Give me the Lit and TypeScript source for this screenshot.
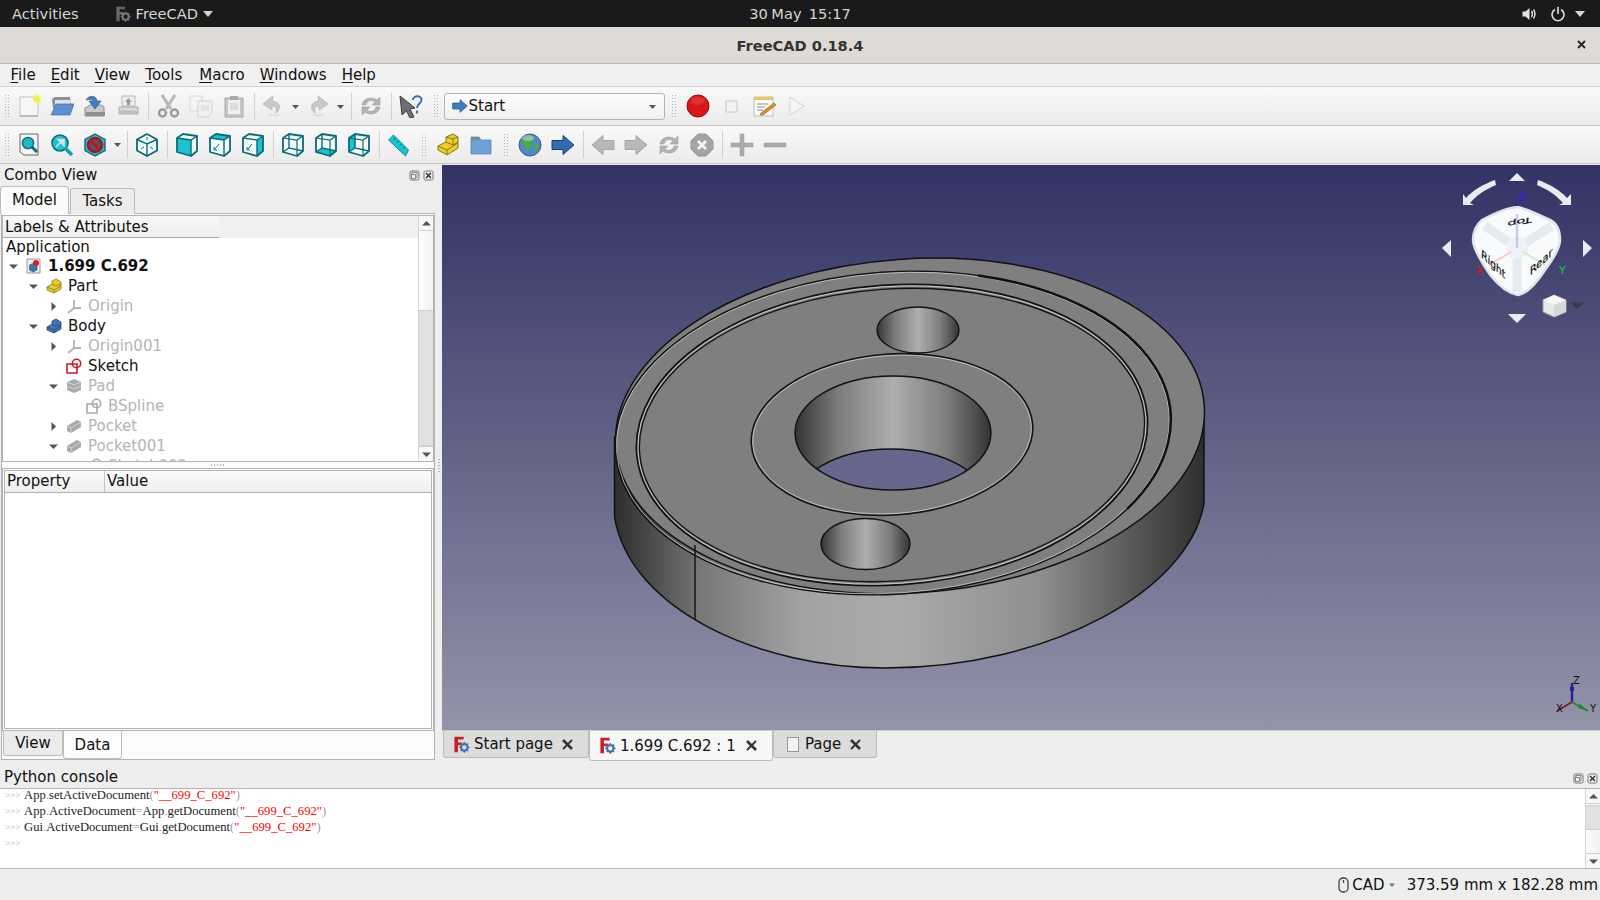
import { LitElement, html, css, svg } from "lit";
import { customElement } from "lit/decorators.js";

const T = "#17c4cf", TD = "#0b6b78";
const icon = (inner: unknown, size = 24, vb = "0 0 24 24") =>
  html`<svg width=${size} height=${size} viewBox=${vb}>${inner}</svg>`;

const cube = (face: string, filled: boolean) => {
  const faces: Record<string, string> = {
    front: "M2 5 L16 7 L16 23 L2 19 Z",
    top: "M2 5 L8 1 L22 3 L16 7 Z",
    right: "M16 7 L22 3 L22 18 L16 23 Z",
    rear: "M8 1 L22 3 L22 18 L8 15 Z",
    bottom: "M2 19 L8 15 L22 18 L16 23 Z",
    left: "M2 5 L8 1 L8 15 L2 19 Z",
  };
  const back = !["front", "top", "right"].includes(face);
  return icon(svg`
    <path d="M2 5 L8 1 L22 3 L22 18 L16 23 L2 19 Z" fill="#f4fbfb"/>
    ${filled ? svg`<path d=${faces[face]} fill=${T}/>` : ""}
    ${back
      ? svg`<path d="M8 1 L8 15 L22 18 M8 15 L2 19" fill="none" stroke=${TD} stroke-width="1.4"/>
            <path d="M2 5 L16 7 L22 3 M16 7 L16 23" fill="none" stroke=${TD} stroke-width="1.2"/>`
      : svg`<path d="M2 5 L16 7 L22 3 M16 7 L16 23" fill="none" stroke=${TD} stroke-width="1.4"/>
            ${face !== "front" ? svg`<path d="M11 11 L7 16 M6 14 L6 17 L9 17" fill="none" stroke=${TD} stroke-width="1"/>` : ""}`}
    <path d="M2 5 L8 1 L22 3 L22 18 L16 23 L2 19 Z" fill="none" stroke=${TD} stroke-width="1.8" stroke-linejoin="round"/>
  `);
};

const fLogo = (c1: string, c2: string, size = 18) =>
  icon(svg`
    <path d="M2 1 H15 V5 H7 V9 H13 V13 H7 V23 H2 Z" fill=${c1}/>
    <circle cx="16" cy="16" r="4.6" fill="none" stroke=${c2} stroke-width="3"/>
    <path d="M16 8.5 V11 M16 21 V23.5 M8.5 16 H11 M21 16 H23.5 M10.7 10.7 L12.4 12.4 M19.6 19.6 L21.3 21.3 M21.3 10.7 L19.6 12.4 M12.4 19.6 L10.7 21.3" stroke=${c2} stroke-width="2"/>
  `, size);

const I: Record<string, () => unknown> = {
  new: () => icon(svg`<path d="M3 3 H21 V22 H3 Z" fill="#f6f6f4" stroke="#c4c4c0"/><path d="M3 22 H21" stroke="#9a9a98"/><circle cx="20" cy="5" r="4.5" fill="#f6ee3a" opacity=".55"/><circle cx="20" cy="5" r="2.6" fill="#f7f02a"/>`),
  open: () => icon(svg`<path d="M2 5 L5 3 H20 L21 14 H3 Z" fill="#8a8f96"/><path d="M5 6 H20 V12 H5 Z" fill="#dfe3e6"/><path d="M6 10 H24 L20 21 H1 Z" fill="#5b8fd0" stroke="#3f6ea8" stroke-width=".7"/>`),
  save: () => icon(svg`<path d="M4 13 L7 11 H18 L21 13 V22 H2 V14 Z" fill="#c9c9c9" stroke="#8c8c8c"/><path d="M3 18 H22 V22 H3 Z" fill="#8f8f8f"/><path d="M3 6 C6 1 13 1 14 7 H18 L12 15 L6 7 H10 C10 5 7 5 3 6 Z" fill="#3f7cc2" stroke="#2c5c96" stroke-width=".7"/>`),
  saveas: () => icon(svg`<path d="M6 2 H19 V12 H6 Z" fill="#ededed" stroke="#b9b9b9"/><path d="M12.5 4 L16 8 H14 V11 H11 V8 H9 Z" fill="#9a9a9a"/><path d="M3 13 H22 V20 H3 Z" fill="#dadada" stroke="#a9a9a9" stroke-linejoin="round"/><path d="M3 18 H22" stroke="#bcbcbc" stroke-width="3"/>`),
  cut: () => icon(svg`<path d="M6 1 L15 15 M19 1 L10 15" stroke="#b9b9b9" stroke-width="3.2"/><circle cx="6.5" cy="19" r="3.5" fill="none" stroke="#9b9b9b" stroke-width="2.4"/><circle cx="18.5" cy="19" r="3.5" fill="none" stroke="#9b9b9b" stroke-width="2.4"/>`),
  copy: () => icon(svg`<path d="M1 2 H13 V17 H1 Z" fill="#f4f4f4" stroke="#d8d8d8"/><path d="M9 7 H23 L23 18 L19 23 H9 Z" fill="#f1f1f1" stroke="#d3d3d3"/><path d="M12 11 H20 V17 H12 Z" fill="#e2e2e2"/>`),
  paste: () => icon(svg`<path d="M3 4 H21 V23 H3 Z" fill="#c8c8c8" stroke="#a8a8a8"/><path d="M6 6 H18 V20 H6 Z" fill="#f0f0f0"/><path d="M8 2 H16 V6 H8 Z" fill="#a9a9a9"/><path d="M8 9 H16 V16 H8 Z" fill="#dcdcdc"/>`),
  undo: () => icon(svg`<path d="M12 2 L2 10 L11 16 V12 C15 12 16 14 15 19 C20 15 20 8 11 7 Z" fill="#c8c8c8" stroke="#bcbcbc"/><ellipse cx="12" cy="21" rx="7" ry="1.6" fill="#e2e2e2"/>`),
  redo: () => icon(svg`<path d="M12 2 L22 10 L13 16 V12 C9 12 8 14 9 19 C4 15 4 8 13 7 Z" fill="#c8c8c8" stroke="#bcbcbc"/><ellipse cx="12" cy="21" rx="7" ry="1.6" fill="#e2e2e2"/>`),
  refresh: () => icon(svg`<path d="M3 11 C4 4 13 2 18 6 L21 3 V11 H13 L16 8 C12 5 8 7 7 11 Z" fill="#b2b2b2" stroke="#9d9d9d" stroke-width=".6"/><path d="M21 13 C20 20 11 22 6 18 L3 21 V13 H11 L8 16 C12 19 16 17 17 13 Z" fill="#b2b2b2" stroke="#9d9d9d" stroke-width=".6"/>`),
  help: () => icon(svg`<path d="M1 2 L16 14 L11 15 L15 23 L11 24 L7.5 17 L3 21 Z" fill="#6f6f6f" stroke="#3c3c3c"/><path d="M14 6 C14 1 23 1 22.5 6 C22 10 18 9.5 18 14 M18 16.5 V19.5" fill="none" stroke="#3a6fb2" stroke-width="2"/>`),
  record: () => icon(svg`<circle cx="12" cy="12" r="11" fill="#d81818" stroke="#8c1010"/><ellipse cx="12" cy="7" rx="7" ry="4" fill="#ee4040" opacity=".6"/>`),
  stop: () => icon(svg`<path d="M7 7 H18 V18 H7 Z" fill="#f2f2f2" stroke="#c9c9c9"/>`),
  macro: () => icon(svg`<path d="M2 3 H21 V22 H2 Z" fill="#fbfbf6" stroke="#bdbdbd"/><path d="M2 3 H21 V6 H2 Z" fill="#e6c861"/><path d="M5 10 H16 M5 13 H13 M5 16 H11" stroke="#8a8a8a"/><path d="M9 19 L22 9 L24 11 L11 21 L8 21 Z" fill="#e08b2c" stroke="#8a5a20" stroke-width=".6"/>`),
  play: () => icon(svg`<path d="M5 3 L19 12 L5 21 Z" fill="#f6f6f6" stroke="#d4d4d4"/>`),
  fit: () => icon(svg`<path d="M3 1 H21 V22 H7 L3 19 Z" fill="#f4f4f4" stroke="#666"/><circle cx="11" cy="10" r="5.6" fill="#1fb8c4" stroke=${TD} stroke-width="1.4"/><path d="M15 14 L20 19" stroke=${TD} stroke-width="3"/>`),
  fitsel: () => icon(svg`<circle cx="10" cy="10" r="8" fill=${T} stroke=${TD} stroke-width="1.6"/><path d="M15 15 L22 22" stroke="#14a0ac" stroke-width="3.6"/><path d="M6 14 L11.5 8.5 M8 6.5 H14 V12.5 Z" stroke="#dde" stroke-width="1.6" fill="#dde"/>`),
  draw: () => icon(svg`<path d="M12 1 L22 6.5 V17.5 L12 23 L2 17.5 V6.5 Z" fill=${T} stroke=${TD} stroke-width="1.4"/><circle cx="12" cy="12" r="7" fill="#4a5a5f" stroke="#b2101a" stroke-width="2.6"/><path d="M7 7 L17 17" stroke="#c8101a" stroke-width="2.8"/>`),
  iso: () => icon(svg`<path d="M12 1 L22 6.5 V17.5 L12 23 L2 17.5 V6.5 Z" fill="#f4fbfb" stroke=${TD} stroke-width="1.8"/><path d="M2 6.5 L12 11 L22 6.5 M12 11 V23" fill="none" stroke=${TD} stroke-width="1.4"/><path d="M6 16 L9 14 M18 16 L15 14 M12 4 V7" stroke=${TD}/>`),
  front: () => cube("front", true), top: () => cube("top", true), right: () => cube("right", true),
  rear: () => cube("rear", false), bottom: () => cube("bottom", true), left: () => cube("left", true),
  measure: () => icon(svg`<g transform="translate(-1.5 0)"><path d="M3 7 L8 2 L23 17 L20 23 Z" fill=${T} stroke="#0e8e9a"/><path d="M8 7 L10 5 M11 10 L13 8 M14 13 L16 11 M17 16 L19 14" stroke="#0b6b78"/></g>`),
  part: () => icon(svg`<path d="M2 13 L10 9 V4 L17 1 L22 4 V15 L11 22 L2 17 Z" fill="#e8cf2b" stroke="#8a7a10"/><path d="M2 13 L11 17 L22 10 M11 17 V22 M10 9 L17 12 L22 9 M17 6 V12 M10 4 L17 6 L22 4" fill="none" stroke="#8a7a10"/>`),
  folder: () => icon(svg`<path d="M2 4 H10 L12 7 H22 V21 H2 Z" fill="#6fa0d6" stroke="#4f7fb5" stroke-width=".7"/><path d="M2 4 H10 L12 7 H2 Z" fill="#7c8a9a"/>`),
  globe: () => icon(svg`<circle cx="12" cy="12" r="11" fill="#4f86cc" stroke="#445e88"/><path d="M6 5 L13 3 L16 7 L12 10 L14 14 L10 18 L7 13 L3 11 Z M17 11 L21 10 L20 17 L16 19 Z" fill="#4caf3c"/><ellipse cx="10" cy="5" rx="6" ry="3" fill="#fff" opacity=".35"/>`),
  fwd: () => icon(svg`<path d="M1 7.5 H12 V2.5 L23 12 L12 21.5 V16.5 H1 Z" fill="#2e6cb4" stroke="#1f3f6c"/>`),
  gback: () => icon(svg`<path d="M23 7.5 H12 V2.5 L1 12 L12 21.5 V16.5 H23 Z" fill="#b8b8b8" stroke="#a6a6a6"/>`),
  gfwd: () => icon(svg`<path d="M1 7.5 H12 V2.5 L23 12 L12 21.5 V16.5 H1 Z" fill="#b8b8b8" stroke="#a6a6a6"/>`),
  gstop: () => icon(svg`<path d="M8 1 H16 L23 8 V16 L16 23 H8 L1 16 V8 Z" fill="#a4a4a4" stroke="#959595"/><path d="M8 8 L16 16 M16 8 L8 16" stroke="#f4f4f4" stroke-width="3"/>`),
  plus: () => icon(svg`<path d="M1 10 H10 V1 H14 V10 H23 V14 H14 V23 H10 V14 H1 Z" fill="#ababab" stroke="#9a9a9a" stroke-width=".5"/>`),
  minus: () => icon(svg`<path d="M1 10 H23 V14 H1 Z" fill="#ababab" stroke="#9a9a9a" stroke-width=".5"/>`),
};

const tiny = (inner: unknown) => icon(inner, 16, "0 0 16 16");
const tree: Record<string, unknown> = {
  doc: tiny(svg`<path d="M1 1 H14 V15 H1 Z" fill="#eee" stroke="#999"/><path d="M3.5 7 L8 5 L11 7 V12 L7 14 L3.5 12 Z" fill="#3f74b4" stroke="#234a7c" stroke-width=".6"/><circle cx="10" cy="5" r="3" fill="#d9202a"/>`),
  part: tiny(svg`<path d="M1 9 L6 6 V3 L10 1 L15 4 V11 L8 15 L1 12 Z" fill="#e5cb2e" stroke="#8d7c14" stroke-width=".8"/><path d="M1 9 L8 12 L15 8 M8 12 V15 M6 6 L10 8 L15 6" fill="none" stroke="#8d7c14" stroke-width=".8"/>`),
  origin: tiny(svg`<path d="M8 2 V10 M8 10 L15 10 M8 10 L2 15" stroke="#b4b4b4" stroke-width="1.8" fill="none"/>`),
  body: tiny(svg`<path d="M1 9 L6 6 V3 L10 1 L15 4 V11 L8 15 L1 12 Z" fill="#3f74b4" stroke="#234a7c" stroke-width=".8"/><path d="M1 9 L8 12 L15 8 M8 12 V15 M6 6 L10 8 L15 6" fill="none" stroke="#234a7c" stroke-width=".8"/>`),
  sketch: tiny(svg`<path d="M1 6 H11 V15 H1 Z" fill="#fff" fill-opacity=".4" stroke="#cc1c24" stroke-width="1.6"/><circle cx="10.5" cy="5.5" r="4.2" fill="none" stroke="#cc1c24" stroke-width="1.6"/>`),
  pad: tiny(svg`<path d="M1 4 L8 1 L15 4 V12 L8 15 L1 12 Z" fill="#a9a9a9"/><path d="M1 4 L8 7 L15 4 M1 8 L8 11 L15 8" fill="none" stroke="#d5d5d5"/>`),
  bspline: tiny(svg`<path d="M1 6 H11 V15 H1 Z" fill="none" stroke="#a8a8a8" stroke-width="1.5"/><circle cx="10.5" cy="5.5" r="4.2" fill="none" stroke="#a8a8a8" stroke-width="1.5"/>`),
  pocket: tiny(svg`<path d="M1 8 L11 2 L15 4 V9 L5 15 L1 13 Z" fill="#a9a9a9"/><path d="M1 8 L5 10 L15 4 M5 10 V15" fill="none" stroke="#d0d0d0"/>`),
};

const rows = [
  { l: 0, a: "d", i: "doc", t: "1.699 C.692", c: "bold" },
  { l: 1, a: "d", i: "part", t: "Part", c: "" },
  { l: 2, a: "r", i: "origin", t: "Origin", c: "dim" },
  { l: 1, a: "d", i: "body", t: "Body", c: "" },
  { l: 2, a: "r", i: "origin", t: "Origin001", c: "dim" },
  { l: 2, a: "", i: "sketch", t: "Sketch", c: "" },
  { l: 2, a: "d", i: "pad", t: "Pad", c: "dim" },
  { l: 3, a: "", i: "bspline", t: "BSpline", c: "dim" },
  { l: 2, a: "r", i: "pocket", t: "Pocket", c: "dim" },
  { l: 2, a: "d", i: "pocket", t: "Pocket001", c: "dim" },
  { l: 3, a: "", i: "bspline", t: "Sketch002", c: "dim" },
];

const ell = (cx: number, cy: number, rx: number, ry: number, extra: Record<string, string> = {}) =>
  svg`<ellipse cx=${cx} cy=${cy} rx=${rx} ry=${ry} transform="rotate(-4 ${cx} ${cy})" fill=${extra.fill ?? "none"} stroke=${extra.stroke ?? "#111"} stroke-width=${extra.w ?? "1.5"}/>`;

const part = svg`
  <defs>
    <linearGradient id="side" gradientUnits="userSpaceOnUse" x1="614" x2="1204" y1="0" y2="0">
      <stop offset="0" stop-color="#2d2d2d"/><stop offset=".13" stop-color="#6c6c6c"/>
      <stop offset=".14" stop-color="#767676"/><stop offset=".32" stop-color="#a2a2a2"/>
      <stop offset=".48" stop-color="#ababab"/><stop offset=".72" stop-color="#8f8f8f"/>
      <stop offset="1" stop-color="#2f2f2f"/>
    </linearGradient>
    <linearGradient id="bore"><stop offset="0" stop-color="#333"/><stop offset=".22" stop-color="#7c7c7c"/><stop offset=".5" stop-color="#aeaeae"/><stop offset=".78" stop-color="#7c7c7c"/><stop offset="1" stop-color="#333"/></linearGradient>
    <clipPath id="boreclip"><ellipse cx="893" cy="433" rx="98" ry="57"/></clipPath>
  </defs>
  <path d="M614.5 437 V517 C630 610 760 668 885 668 C1050 668 1190 590 1204 503 V417 Z" fill="url(#side)" stroke="#111" stroke-width="1.5"/>
  ${ell(910, 426, 295, 167, { fill: "#7f7f7f" })}
  ${ell(893, 433, 278, 161, { w: "1.6" })}
  ${ell(893, 433, 277, 160, { stroke: "#d8d8d8", w: ".7" })}
  <path d="M978 275.4 A278 161 -4 0 1 1127 509" fill="none" stroke="#111" stroke-width="2.5"/>
  ${ell(892, 435, 256, 150, { w: "1.7" })}
  ${ell(892, 435, 254.5, 148.5, { stroke: "#d8d8d8", w: ".8" })}
  ${ell(892, 435, 253, 146, { w: "1.3", fill: "#7f7f7f" })}
  ${ell(892, 434.5, 141, 80.5, { w: "1.6" })}
  ${ell(892, 434.5, 139.5, 79, { stroke: "#d8d8d8", w: ".7", fill: "#7f7f7f" })}
  <ellipse cx="893" cy="433" rx="98" ry="57" fill="url(#bore)"/>
  <g clip-path="url(#boreclip)"><ellipse cx="891" cy="506" rx="98" ry="57" fill="#67678d" stroke="#111" stroke-width="1.4"/></g>
  <ellipse cx="893" cy="433" rx="98" ry="57" fill="none" stroke="#111" stroke-width="1.4"/>
  <ellipse cx="918" cy="330" rx="41" ry="23" fill="url(#bore)" stroke="#111" stroke-width="1.4"/>
  <ellipse cx="865.5" cy="544" rx="44.5" ry="25.5" fill="url(#bore)" stroke="#111" stroke-width="1.4"/>
  <path d="M695 545 V620" stroke="#111" stroke-width="1.4"/>
`;

const navCube = svg`
  <g fill="#e8ecf2">
    <path d="M1509 181 L1525 181 L1517 173 Z"/><path d="M1442 248 L1451 240 L1451 257 Z"/>
    <path d="M1583 240 L1583 257 L1592 248 Z"/><path d="M1508 314 L1526 314 L1517 323 Z"/>
    <path d="M1495 180 L1496 185 C1484 190 1476 196 1470 203 L1474 205 L1463 205 L1463 194 L1466 198 C1473 190 1484 184 1495 180 Z"/>
    <path d="M1538 180 L1537 185 C1549 190 1557 196 1563 203 L1559 205 L1571 205 L1571 194 L1567 198 C1560 190 1549 184 1538 180 Z"/>
  </g>
  <path d="M1517 207 Q1525 208 1550 220 Q1560 225 1560 240 Q1560 250 1545 270 Q1530 293 1518 295 Q1505 293 1491 276 Q1473 250 1473 240 Q1473 228 1482 220 Q1505 208 1517 207 Z" fill="#f8fafc" stroke="#e0e5ec" stroke-width="2.5"/>
  <path d="M1517 248 L1485 226 M1517 248 L1552 226 M1517 248 V292" stroke="#e6ebf1" stroke-width="9" />
  <circle cx="1517" cy="248" r="11" fill="#eef1f5"/>
  <path d="M1517 248 V214" stroke="#c6c8ee" stroke-width="2.4"/>
  <path d="M1511 252 L1489 265" stroke="#eec6c6" stroke-width="1.6"/>
  <path d="M1523 252 L1545 265" stroke="#c6eec6" stroke-width="1.6"/>
  <path d="M1516.5 206 V204" stroke="#1616d0" stroke-width="1.6"/>
  <g class="cubetxt">
    <text transform="matrix(-1.45 .28 .05 -.75 1532 217)">Top</text>
    <text transform="matrix(.92 .84 -.05 1.1 1481 257)">Right</text>
    <text transform="matrix(.98 -.92 .02 1.1 1530 276)">Rear</text>
  </g>
  <g class="axl">
    <text x="1518" y="201" fill="#2222ff">Z</text>
    <text x="1476" y="274" fill="#e01010">X</text>
    <text x="1559" y="274" fill="#10d030">Y</text>
  </g>
  <path d="M1554 295 L1566 300 V312 L1554 317 L1543 312 V300 Z" fill="#e8e8e8" stroke="#9a9a9a"/>
  <path d="M1543 300 L1554 305 L1566 300 L1554 295 Z" fill="#f6f6f6"/>
  <path d="M1554 305 V317 L1566 312 V300 Z" fill="#d8d8d8"/>
  <path d="M1570 302.5 H1584 L1577 309 Z" fill="#3a3a4e"/>
  <path d="M1572 702 V683" stroke="#22229a" stroke-width="2.4"/><path d="M1570 687 H1574 V691 H1570 Z" fill="#22229a"/>
  <path d="M1572 702 L1557 711" stroke="#8a1a1a" stroke-width="1.8"/>
  <path d="M1572 702 L1588 711" stroke="#1a8a2a" stroke-width="1.8"/><path d="M1580 704 L1588 711 L1578 708 Z" fill="#1a8a2a"/>
  <g class="axs">
    <text x="1573" y="684">Z</text><text x="1556" y="712">X</text><text x="1590" y="712">Y</text>
  </g>
`;

const pyLine = (t: string) => {
  const parts = t.split(/("[^"]*"|[.=()])/).filter(Boolean);
  return parts.map((p) => {
    if (p.startsWith('"')) return html`<span class="str">${p}</span>`;
    if (/^[.=()]$/.test(p)) return html`<span class="op">${p}</span>`;
    return p;
  });
};

const tri = (d: string) => html`<svg class="tri" width="9" height="9" viewBox="0 0 9 9"><path d=${d} fill="#555"/></svg>`;

@customElement("app-root")
export class AppRoot extends LitElement {
  static styles = css`
    :host { display: flex; flex-direction: column; width: 1600px; height: 900px; overflow: hidden; background: #eeeeee; font-family: "DejaVu Sans", sans-serif; font-size: 15px; color: #111; }
    svg { display: block; flex: none; }
    .top { height: 27px; flex: none; background: #1a1a1a; color: #d6d6d6; font-size: 14.6px; display: grid; grid-template-columns: 1fr auto 1fr; align-items: center; }
    .tl, .tr { display: flex; align-items: center; }
    .tl { padding-left: 12px; }
    .app { margin-left: 36px; display: flex; align-items: center; gap: 5px; }
    .caret { margin-left: 5px; }
    .tr { justify-content: flex-end; padding-right: 15px; gap: 12px; }
    .tr svg:last-child { margin-left: -3px; }
    .date { word-spacing: -1px; }
    .title { height: 37px; box-sizing: border-box; flex: none; background: #dedbd7; border-bottom: 1px solid #b9b6b2; display: flex; align-items: center; justify-content: center; font-weight: 700; font-size: 14.6px; color: #333; position: relative; }
    .x { position: absolute; right: 12px; top: 11px; }
    .menu { height: 23px; box-sizing: border-box; flex: none; background: #f0f0f0; display: flex; align-items: center; padding-left: 3px; border-bottom: 1px solid #d0d0d0; }
    .menu span { padding: 0 7.5px; }
    .menu span:nth-child(4) { padding-right: 9.5px; }
    u { text-decoration-thickness: 1px; text-underline-offset: 2px; }
    .tb { height: 39px; box-sizing: border-box; flex: none; display: flex; align-items: center; background: linear-gradient(#f9f9f9, #ebebeb); border-bottom: 1px solid #c4c4c4; }
    .tb.two { height: 38px; }
    .btn { width: 33px; height: 30px; flex: none; display: flex; align-items: center; justify-content: center; }
    .wide { width: 45px; justify-content: flex-start; padding-left: 3px; box-sizing: border-box; gap: 6px; }
    .narrow { width: 12px; flex: none; display: flex; justify-content: center; }
    .sep { width: 7px; flex: none; display: flex; justify-content: center; }
    .sep::before { content: ""; width: 1px; height: 27px; background: #d2d2d2; }
    .handle { width: 16px; flex: none; height: 24px; display: flex; justify-content: center; }
    .handle.first { width: 12.5px; }
    .handle.w { width: 17px; }
    .handle::before { content: ""; width: 5px; height: 24px; background-image: radial-gradient(circle, #b4b4b4 .7px, transparent .9px); background-size: 3px 3px; }
    .combo { width: 221px; height: 27px; box-sizing: border-box; flex: none; border: 1px solid #b4b4b4; border-radius: 3px; background: linear-gradient(#fdfdfd, #efefef); display: flex; align-items: center; padding: 0 7px; gap: 1px; }
    .combo .grow { flex: 1; }
    .main { flex: none; height: 598px; display: flex; }
    .left { width: 442px; flex: none; display: flex; flex-direction: column; position: relative; }
    .dockhd { height: 22px; box-sizing: border-box; padding: 0 0 1px 4px; flex: none; display: flex; align-items: center; position: relative; }
    .dockbtns { position: absolute; right: 8px; top: 6px; display: flex; gap: 3.5px; }
    .tabs { display: flex; gap: 1px; height: 28px; flex: none; align-items: flex-end; position: relative; z-index: 1; margin-bottom: -1px; }
    .tab { box-sizing: border-box; height: 26px; padding-bottom: 1px; border: 1px solid #bdbdbd; border-bottom: 0; border-radius: 3px 3px 0 0; background: #ececec; display: flex; align-items: center; justify-content: center; width: 65px; }
    .tab.on { height: 28px; padding-bottom: 2px; width: 69px; background: #fbfbfb; }
    .frame { margin-left: 1px; width: 434px; box-sizing: border-box; height: 547px; border: 1px solid #b4b4b4; background: #fbfbfb; display: flex; flex-direction: column; padding: 1px 0 0; }
    .tree { height: 247px; flex: none; box-sizing: border-box; border: 1px solid #b4b4b4; background: #fff; display: flex; overflow: hidden; }
    .tcontent { flex: 1; min-width: 0; overflow: hidden; }
    .thead { height: 22px; background: #f0f0f0; }
    .thead div { width: 216px; height: 22px; box-sizing: border-box; background: linear-gradient(#f9f9f9, #eeeeee); border-bottom: 1px solid #a8a8a8; padding-left: 2px; line-height: 22px; }
    .row { height: 20px; display: flex; align-items: center; white-space: nowrap; }
    .row.app0 { padding-left: 3px; height: 18px; }
    .arr { width: 20px; flex: none; display: flex; justify-content: center; }
    .ico { width: 21px; flex: none; display: flex; justify-content: center; }
    .lbl { padding-left: 4px; }
    .bold { font-weight: 700; }
    .dim { color: #b4b4b4; }
    .sb { width: 15px; flex: none; border-left: 1px solid #d4d4d4; display: flex; flex-direction: column; box-sizing: border-box; background: linear-gradient(90deg, #fdfdfd, #f1f1f1); }
    .sbbtn { height: 14px; flex: none; display: flex; align-items: center; justify-content: center; border-bottom: 1px solid #d0d0d0; background: #f7f7f7; }
    .sbbtn.b { border-bottom: 0; border-top: 1px solid #d0d0d0; }
    .sbg { flex: 1; }
    .thumb { background: #e1e1e1; border-top: 1px solid #d0d0d0; border-bottom: 1px solid #d0d0d0; box-sizing: border-box; }
    .th-tree { flex: 1; } .gap-tree { height: 79px; flex: none; }
    .gap-con { height: 1px; flex: none; } .th-con { height: 25px; flex: none; }
    .split { height: 6px; flex: none; display: flex; justify-content: center; }
    .dots { width: 16px; height: 2px; margin-top: 2px; background-image: radial-gradient(circle, #b4b4b4 .6px, transparent .8px); background-size: 3px 2px; }
    .prop { flex: none; height: 263px; box-sizing: border-box; border: 1px solid #b4b4b4; padding: 1px; }
    .ptable { height: 100%; box-sizing: border-box; border: 1px solid #b4b4b4; background: #fff; }
    .phead { height: 21px; display: flex; background: linear-gradient(#fbfbfb, #eeeeee); border-bottom: 1px solid #b0b0b0; line-height: 20px; }
    .phead div:first-child { width: 100px; padding-left: 2px; box-sizing: border-box; border-right: 1px solid #c4c4c4; }
    .phead div:last-child { padding-left: 2px; }
    .btabs { display: flex; align-items: flex-start; padding-left: 1px; flex: none; }
    .btab { box-sizing: border-box; height: 25px; width: 60px; background: #ebebeb; border: 1px solid #bdbdbd; border-top: 0; border-radius: 0 0 3px 3px; display: flex; align-items: center; justify-content: center; }
    .btab.on { height: 28px; background: #fdfdfd; width: 59px; }
    .vdots { position: absolute; left: 438px; top: 294px; width: 2px; height: 16px; background-image: radial-gradient(circle, #b4b4b4 .6px, transparent .8px); background-size: 2px 3px; }
    .right { flex: 1; min-width: 0; display: flex; flex-direction: column; }
    .view { height: 565px; flex: none; background: linear-gradient(#323265, #9393a9); position: relative; margin-top: 1px; }
    .canvas { position: absolute; inset: 0; }
    .cubetxt text { font: 400 10px "DejaVu Sans", sans-serif; fill: #111; stroke: #111; stroke-width: .2; }
    .axl text { font: 11px "DejaVu Sans", sans-serif; }
    .axs text { font: 10px "DejaVu Sans", sans-serif; fill: #111; }
    .dtabs { display: flex; align-items: flex-start; padding-left: 1px; border-top: 1px solid #c8c8c8; }
    .dtab { box-sizing: border-box; height: 27px; background: #dcdcdc; border: 1px solid #bdbdbd; border-top: 0; border-radius: 0 0 3px 3px; display: flex; align-items: center; padding-left: 9px; white-space: nowrap; }
    .dtab > svg:first-child { margin-right: 4px; }
    .dtab.t1 { width: 146px; }
    .dtab.t2 { width: 184px; height: 30px; background: #f6f6f6; }
    .dtab.t3 { width: 104px; padding-left: 13px; }
    .dtab.t3 > svg:first-child { margin-right: 5px; }
    .dtab .sp { flex: 1; }
    .dtab svg.cl { margin-right: 14px; }
    .hdots { margin: 3px 0 0 349px; }
    .pyhd { height: 26px; flex: none; display: flex; align-items: flex-end; padding: 0 0 2px 4px; box-sizing: border-box; position: relative; }
    .pyhd .dockbtns { right: 2px; top: 11px; }
    .con { height: 81px; flex: none; box-sizing: border-box; border-top: 1px solid #b4b4b4; border-bottom: 1px solid #b4b4b4; background: #fff; display: flex; overflow: hidden; }
    .lines { flex: 1; font: 12.67px/16px "Liberation Serif", serif; color: #222; margin-top: -2px; }
    .ln { display: flex; height: 16px; white-space: pre; }
    .pm { width: 24px; flex: none; padding-left: 5px; box-sizing: border-box; font-size: 9px; color: #a8a8a8; }
    .str { color: #f00; } .op { color: #a0a0a0; }
    .status { flex: 1; display: flex; align-items: center; justify-content: flex-end; padding-right: 2px; gap: 3px; }
    .status .mm { margin-left: 8px; }
  `;

  private tb(items: string[]) {
    return items.map((n) => {
      if (n === "|") return html`<div class="sep"></div>`;
      if (n === ":") return html`<div class="handle"></div>`;
      if (n === ":w") return html`<div class="handle w"></div>`;
      if (n === ":0") return html`<div class="handle first"></div>`;
      if (n.startsWith("^")) return html`<div class="btn wide">${I[n.slice(1)]()}${tri("M1 3 H8 L4.5 7 Z")}</div>`;
      if (n === "v") return html`<div class="narrow">${tri("M1 3 H8 L4.5 7 Z")}</div>`;
      if (n === "combo") return html`<div class="combo">${icon(svg`<path d="M1 7.5 H12 V2.5 L23 12 L12 21.5 V16.5 H1 Z" fill="#3f7cc2" stroke="#28507f"/>`, 16)}<span>Start</span><span class="grow"></span>${tri("M1 3 H8 L4.5 7 Z")}</div>`;
      return html`<div class="btn">${I[n]()}</div>`;
    });
  }

  private dockBtns() {
    return html`<div class="dockbtns">
      ${icon(svg`<rect x="1" y="1" width="9" height="9" rx="1.5" fill="none" stroke="#777"/><rect x="3" y="2.5" width="5" height="5" fill="none" stroke="#777" stroke-width=".8"/><rect x="2.5" y="4.5" width="4" height="4" fill="#eee" stroke="#777" stroke-width=".8"/>`, 11, "0 0 11 11")}
      ${icon(svg`<rect x="1" y="1" width="9" height="9" rx="1.5" fill="none" stroke="#777"/><path d="M3 3 L8 8 M8 3 L3 8" stroke="#333" stroke-width="1.5"/>`, 11, "0 0 11 11")}
    </div>`;
  }

  private closeX() {
    return html`<svg class="cl" width="13" height="13" viewBox="0 0 13 13"><path d="M2 2 L11 11" stroke="#333" stroke-width="2.6"/><path d="M11 2 L2 11" stroke="#333" stroke-width="1.8"/></svg>`;
  }

  render() {
    return html`
      <div class="top">
        <div class="tl"><span>Activities</span>
          <div class="app">${fLogo("#666", "#777", 16)}<span>FreeCAD</span></div>
          <svg class="caret" width="10" height="6" viewBox="0 0 10 6"><path d="M0 0 H10 L5 6 Z" fill="#d6d6d6"/></svg>
        </div>
        <div class="date">30 May&nbsp;&nbsp;15:17</div>
        <div class="tr">
          <svg width="17" height="16" viewBox="0 0 16 16"><path d="M1 5.5 H4 L8 2 V14 L4 10.5 H1 Z" fill="#e4e4e4"/><path d="M10 5 Q12 8 10 11 M12 3.5 Q15 8 12 12.5" fill="none" stroke="#e4e4e4" stroke-width="1.4"/></svg>
          <svg width="16" height="16" viewBox="0 0 16 16"><path d="M5 3.5 A6 6 0 1 0 11 3.5" fill="none" stroke="#e4e4e4" stroke-width="1.6"/><path d="M8 1 V8" stroke="#e4e4e4" stroke-width="1.6"/></svg>
          <svg width="10" height="6" viewBox="0 0 10 6"><path d="M0 0 H10 L5 6 Z" fill="#d6d6d6"/></svg>
        </div>
      </div>
      <div class="title">FreeCAD 0.18.4
        <svg class="x" width="13" height="13" viewBox="0 0 13 13"><path d="M3 3 L10 10 M10 3 L3 10" stroke="#222" stroke-width="1.8"/></svg>
      </div>
      <div class="menu">
        <span><u>F</u>ile</span><span><u>E</u>dit</span><span><u>V</u>iew</span><span><u>T</u>ools</span><span><u>M</u>acro</span><span><u>W</u>indows</span><span><u>H</u>elp</span>
      </div>
      <div class="tb">${this.tb([":0", "new", "open", "save", "saveas", "|", "cut", "copy", "paste", "|", "^undo", "^redo", "|", "refresh", "|", "help", ":", "combo", ":w", "record", "stop", "macro", "play"])}</div>
      <div class="tb two">${this.tb([":0", "fit", "fitsel", "draw", "v", "|", "iso", "|", "front", "top", "right", "|", "rear", "bottom", "left", "|", "measure", ":", "part", "folder", ":", "globe", "fwd", "|", "gback", "gfwd", "refresh", "gstop", "|", "plus", "minus"])}</div>
      <div class="main">
        <div class="left">
          <div class="dockhd">Combo View${this.dockBtns()}</div>
          <div class="tabs"><div class="tab on">Model</div><div class="tab">Tasks</div></div>
          <div class="frame">
            <div class="tree">
              <div class="tcontent">
                <div class="thead"><div>Labels &amp; Attributes</div></div>
                <div class="row app0">Application</div>
                ${rows.map((r) => html`<div class="row">
                  ${r.l > 0 ? html`<span style="width:${r.l * 20}px;flex:none"></span>` : ""}
                  <div class="arr">${r.a === "d" ? tri("M0 2.5 H9 L4.5 7 Z") : r.a === "r" ? tri("M2.5 0 V9 L7 4.5 Z") : ""}</div>
                  <div class="ico">${tree[r.i]}</div>
                  <span class="lbl ${r.c}">${r.t}</span>
                </div>`)}
              </div>
              <div class="sb">
                <div class="sbbtn">${tri("M0 6.5 H9 L4.5 2 Z")}</div>
                <div class="gap-tree"></div>
                <div class="thumb th-tree"></div>
                <div class="sbbtn b">${tri("M0 2.5 H9 L4.5 7 Z")}</div>
              </div>
            </div>
            <div class="split"><div class="dots"></div></div>
            <div class="prop"><div class="ptable">
              <div class="phead"><div>Property</div><div>Value</div></div>
            </div></div>
            <div class="btabs"><div class="btab">View</div><div class="btab on">Data</div></div>
          </div>
          <div class="vdots"></div>
        </div>
        <div class="right">
          <div class="view">
            <svg class="canvas" viewBox="442 165 1158 565" width="1158" height="565">${part}${navCube}</svg>
          </div>
          <div class="dtabs">
            <div class="dtab t1">${fLogo("#c81e24", "#3f74b4", 17)}<span>Start page</span><span class="sp"></span>${this.closeX()}</div>
            <div class="dtab t2">${fLogo("#c81e24", "#3f74b4", 17)}<span>1.699 C.692 : 1</span><span class="sp"></span>${this.closeX()}</div>
            <div class="dtab t3"><svg width="13" height="15" viewBox="0 0 13 15"><rect x=".5" y=".5" width="11" height="14" fill="#f3f3f3" stroke="#999"/></svg><span>Page</span><span class="sp"></span>${this.closeX()}</div>
          </div>
          <div class="dots hdots"></div>
        </div>
      </div>
      <div class="pyhd">Python console${this.dockBtns()}</div>
      <div class="con">
        <div class="lines">
          <div class="ln"><span class="pm">&gt;&gt;&gt;</span><span>${pyLine('App.setActiveDocument("__699_C_692")')}</span></div>
          <div class="ln"><span class="pm">&gt;&gt;&gt;</span><span>${pyLine('App.ActiveDocument=App.getDocument("__699_C_692")')}</span></div>
          <div class="ln"><span class="pm">&gt;&gt;&gt;</span><span>${pyLine('Gui.ActiveDocument=Gui.getDocument("__699_C_692")')}</span></div>
          <div class="ln"><span class="pm">&gt;&gt;&gt;</span></div>
        </div>
        <div class="sb">
          <div class="sbbtn">${tri("M0 6.5 H9 L4.5 2 Z")}</div>
          <div class="gap-con"></div>
          <div class="thumb th-con"></div>
          <div class="sbg"></div>
          <div class="sbbtn b">${tri("M0 2.5 H9 L4.5 7 Z")}</div>
        </div>
      </div>
      <div class="status">
        <svg width="11" height="16" viewBox="0 0 11 16"><rect x="1" y="1" width="9" height="14" rx="4" fill="none" stroke="#444" stroke-width="1.3"/><path d="M5.5 3 V6" stroke="#444" stroke-width="1.3"/></svg>
        <span>CAD</span>
        <svg width="8" height="6" viewBox="0 0 8 6"><path d="M1 1.5 H7 L4 5 Z" fill="#777"/></svg>
        <span class="mm">373.59 mm x 182.28 mm</span>
      </div>
    `;
  }
}
